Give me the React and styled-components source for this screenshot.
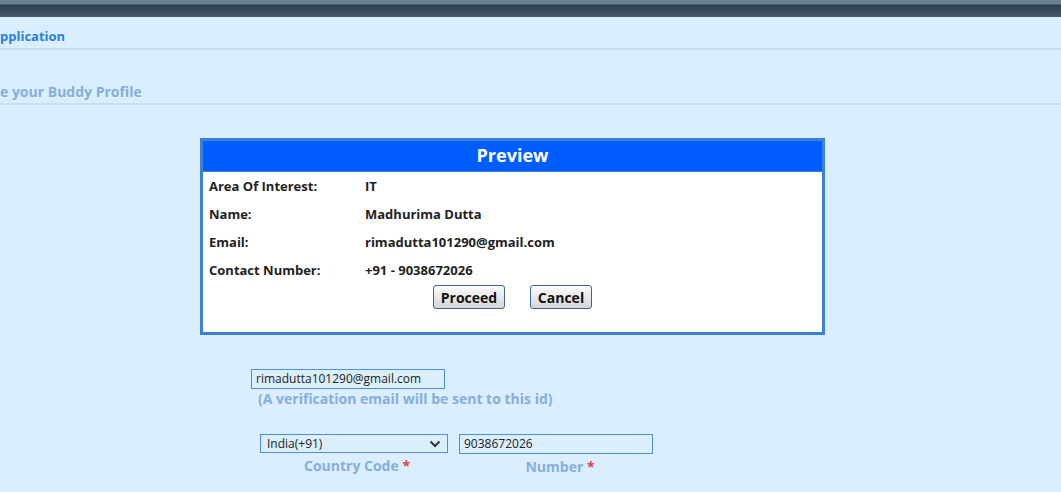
import styled, { createGlobalStyle } from "styled-components";

const GlobalStyle = createGlobalStyle`
    html, body {
        margin: 0;
        padding: 0;
        background: #dbeefe;
        font-family: "Open Sans", "DejaVu Sans", sans-serif;
    }
`;

const Page = styled.div`
    width: 1061px;
    height: 492px;
    overflow: hidden;
    background: #dbeefe;
    display: flex;
    flex-direction: column;
`;

const TopBar = styled.div`
    height: 17px;
    background: linear-gradient(to bottom, #6b8191 0px, #6b8191 4px, #2c3f50 5px, #47596a 17px);
`;

const SectionTitle = styled.div`
    height: ${(p) => p.$height}px;
    display: flex;
    align-items: flex-end;
    border-bottom: 2px solid #c8def2;
    padding-bottom: ${(p) => p.$pad}px;
    box-sizing: border-box;

    h2 {
        margin: 0;
        font-size: ${(p) => p.$size}px;
        font-weight: 700;
        color: ${(p) => p.$color};
        line-height: 18px;
    }
`;

const Content = styled.div`
    padding-top: 33px;
    padding-left: 200px;
`;

const Dialog = styled.div`
    width: 625px;
    height: 197px;
    box-sizing: border-box;
    border: 3px solid #3b80d9;
    background: #ffffff;
`;

const DialogHeader = styled.div`
    height: 30px;
    background: #005dff;
    border-bottom: 1px solid #3b80d9;
    color: #ffffff;
    font-size: 18px;
    font-weight: 700;
    text-align: center;
    line-height: 29px;
`;

const DialogBody = styled.div`
    padding: 0 6px;
`;

const InfoRow = styled.div`
    display: grid;
    grid-template-columns: 156px 1fr;
    height: 28px;
    align-items: center;
    font-size: 13px;
    font-weight: 700;
    color: #222222;
`;

const Actions = styled.div`
    display: flex;
    justify-content: center;
    gap: 25px;
    margin-top: 1px;
`;

const Button = styled.button`
    height: 24px;
    padding: 0 4px;
    min-width: ${(p) => p.$width}px;
    border: 1px solid #3e6692;
    border-radius: 3px;
    background: linear-gradient(to bottom, #fbfbfb 0%, #e9e9e9 50%, #d6d6d6 100%);
    font-family: inherit;
    font-size: 14px;
    font-weight: 700;
    color: #111111;
`;

const FormArea = styled.div`
    padding: 34px 0 0 51px;
`;

const TextInput = styled.div`
    width: ${(p) => p.$width}px;
    height: 20px;
    box-sizing: border-box;
    border: 1px solid #4a8fe0;
    padding: 0 4px;
    font-size: 12px;
    line-height: 18px;
    color: #222222;
`;

const Hint = styled.div`
    margin: 1px 0 0 7px;
    font-size: 14px;
    font-weight: 700;
    color: #86aedb;
    line-height: 17px;
`;

const PhoneRow = styled.div`
    display: flex;
    gap: 11px;
    margin: 27px 0 0 9px;
`;

const Field = styled.div`
    display: flex;
    flex-direction: column;
    align-items: center;
    width: ${(p) => p.$width}px;
`;

const Select = styled.div`
    width: 100%;
    height: 19px;
    box-sizing: border-box;
    border: 1px solid #4a8fe0;
    padding: 0 6px;
    display: flex;
    align-items: center;
    justify-content: space-between;
    font-size: 12px;
    color: #222222;
`;

const Label = styled.div`
    margin-top: 4px;
    padding-left: ${(p) => p.$nudge || 0}px;
    font-size: 14px;
    font-weight: 700;
    color: #86aedb;
    line-height: 17px;

    span {
        color: #e23b45;
    }
`;

const info = [
    { label: "Area Of Interest:", value: "IT" },
    { label: "Name:", value: "Madhurima Dutta" },
    { label: "Email:", value: "rimadutta101290@gmail.com" },
    { label: "Contact Number:", value: "+91 - 9038672026" },
];

const App = () => {
    return (
        <Page>
            <GlobalStyle />
            <TopBar />
            <SectionTitle $height={33} $pad={3} $size={13} $color="#2c7fd6">
                <h2>pplication</h2>
            </SectionTitle>
            <SectionTitle $height={55} $pad={2} $size={14} $color="#86aedb">
                <h2>e your Buddy Profile</h2>
            </SectionTitle>
            <Content>
                <Dialog>
                    <DialogHeader>Preview</DialogHeader>
                    <DialogBody>
                        {info.map((item) => (
                            <InfoRow key={item.label}>
                                <div>{item.label}</div>
                                <div>{item.value}</div>
                            </InfoRow>
                        ))}
                        <Actions>
                            <Button $width={72}>Proceed</Button>
                            <Button $width={62}>Cancel</Button>
                        </Actions>
                    </DialogBody>
                </Dialog>
                <FormArea>
                    <TextInput $width={194}>rimadutta101290@gmail.com</TextInput>
                    <Hint>(A verification email will be sent to this id)</Hint>
                    <PhoneRow>
                        <Field $width={188}>
                            <Select>
                                <span>India(+91)</span>
                                <svg width="12" height="8" viewBox="0 0 12 8">
                                    <path d="M1.5 1.5 L6 6 L10.5 1.5" fill="none" stroke="#333" strokeWidth="2" />
                                </svg>
                            </Select>
                            <Label $nudge={6}>Country Code <span>*</span></Label>
                        </Field>
                        <Field $width={194}>
                            <TextInput $width={194}>9038672026</TextInput>
                            <Label $nudge={8}>Number <span>*</span></Label>
                        </Field>
                    </PhoneRow>
                </FormArea>
            </Content>
        </Page>
    );
};

export default App;
